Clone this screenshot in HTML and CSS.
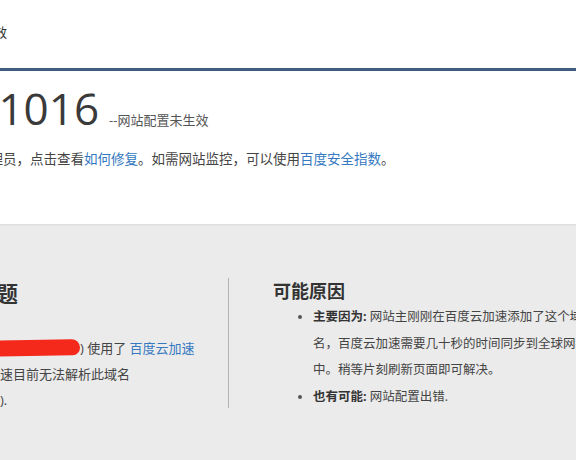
FILE: index.html
```html
<!DOCTYPE html>
<html lang="zh-CN">
<head>
<meta charset="utf-8">
<title>错误 1016</title>
<link rel="stylesheet" href="styles.css">
</head>
<body>
<div class="header"><span class="crumb">网站配置未生效</span></div>
<div class="hero">
  <h1 class="code"><span class="code-num">错误 1016</span><small class="code-desc">--网站配置未生效</small></h1>
  <p class="hint">如果您是网站管理员，点击查看<a class="link" href="#">如何修复</a>。如需网站监控，可以使用<a class="link" href="#">百度安全指数</a>。</p>
</div>
<div class="info">
  <div class="what">
    <h2 class="col-title">问题</h2>
    <p class="what-text"><span class="redact"></span>) 使用了 <a class="link" href="#">百度云加速</a><br>云加速目前无法解析此域名<br>配置).</p>
  </div>
  <div class="reasons">
    <h3 class="reasons-title">可能原因</h3>
    <ul class="reason-list">
      <li><b class="label">主要因为:</b> 网站主刚刚在百度云加速添加了这个域名，百度云加速需要几十秒的时间同步到全球网络中。稍等片刻刷新页面即可解决。</li>
      <li><b class="label">也有可能:</b> 网站配置出错.</li>
    </ul>
  </div>
</div>
</body>
</html>
```

FILE: styles.css
```css
html, body {
  margin: 0;
  overflow: hidden;
}
body {
  width: 576px;
  height: 460px;
  background: #ebebeb;
  color: #333;
  font-family: "Open Sans", "Noto Sans CJK SC", sans-serif;
  font-size: 13px;
}
.link {
  color: #3579c1;
  text-decoration: none;
}
.header {
  box-sizing: border-box;
  height: 71px;
  padding-top: 24px;
  background: #fff;
  border-bottom: 3px solid #3f5d7d;
}
.crumb {
  display: block;
  margin-left: -84px;
  line-height: 16px;
  color: #333;
  white-space: nowrap;
}
.hero {
  box-sizing: border-box;
  height: 153px;
  padding-top: 15px;
  background: #fff;
  box-shadow: 0 1px 2px rgba(0, 0, 0, 0.08);
  position: relative;
}
.code {
  display: flex;
  align-items: baseline;
  height: 44px;
  margin: 0 0 0 -101px;
  font-size: 44px;
  line-height: 44px;
  font-weight: 400;
  color: #3a3a3a;
  white-space: nowrap;
}
.code-desc {
  margin-left: 10px;
  font-size: 13px;
  line-height: 16px;
  color: #555;
}
.hint {
  margin: 19px 0 0 -105px;
  font-size: 13.5px;
  line-height: 20px;
  white-space: nowrap;
  color: #444;
}
.info {
  display: flex;
  padding-top: 54px;
}
.what {
  flex: none;
  box-sizing: border-box;
  width: 255px;
  height: 130px;
  margin-left: -26px;
  border-right: 1px solid #b3b3b3;
}
.col-title {
  margin: 0;
  font-size: 22px;
  line-height: 30px;
  font-weight: 700;
  white-space: nowrap;
}
.what-text {
  margin: 27px 0 0;
  line-height: 26px;
  white-space: nowrap;
  color: #444;
}
.redact {
  display: inline-block;
  width: 106px;
  height: 16px;
  vertical-align: -3px;
  background: #f5281c;
  border-radius: 0 9px 8px 0;
  transform: rotate(-1deg);
}
.reasons {
  flex: none;
  width: 340px;
  padding-left: 44px;
}
.reasons-title {
  margin: 0;
  font-size: 18px;
  line-height: 26px;
  font-weight: 700;
}
.reason-list {
  width: 280px;
  margin: 0;
  padding-left: 40px;
  font-size: 12.5px;
  line-height: 26.5px;
  color: #444;
}
.reason-list li::marker {
  color: #555;
}
.label {
  font-weight: 700;
  color: #333;
}
```
